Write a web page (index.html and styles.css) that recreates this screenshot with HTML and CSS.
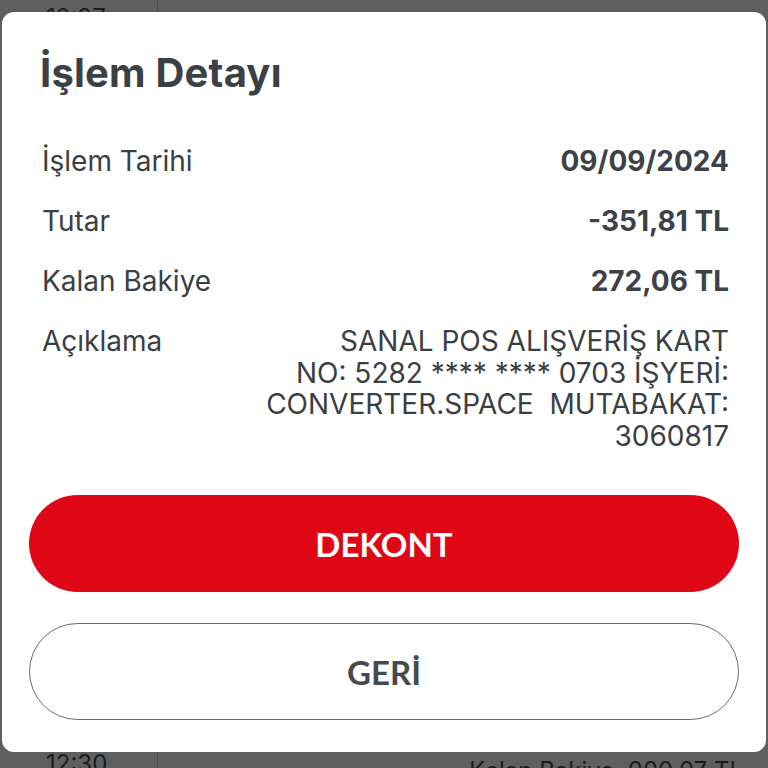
FILE: index.html
```html
<!DOCTYPE html>
<html lang="tr">
<head>
<meta charset="utf-8">
<title>İşlem Detayı</title>
<link rel="stylesheet" href="styles.css">
</head>
<body>
<div class="screen">
  <div class="list-strip list-strip--top">
    <div class="list-time list-time--top">12:37</div>
    <div class="list-body"></div>
  </div>

  <section class="modal">
    <h1 class="modal-title">İşlem Detayı</h1>
    <dl class="details">
      <div class="detail-row">
        <dt class="detail-label">İşlem Tarihi</dt>
        <dd class="detail-value">09/09/2024</dd>
      </div>
      <div class="detail-row">
        <dt class="detail-label">Tutar</dt>
        <dd class="detail-value">-351,81 TL</dd>
      </div>
      <div class="detail-row">
        <dt class="detail-label">Kalan Bakiye</dt>
        <dd class="detail-value">272,06 TL</dd>
      </div>
      <div class="detail-row">
        <dt class="detail-label">Açıklama</dt>
        <dd class="detail-value detail-value--desc">SANAL POS ALIŞVERİŞ KART<br>NO: 5282 **** **** 0703 İŞYERİ:<br>CONVERTER.SPACE&nbsp; MUTABAKAT:<br>3060817</dd>
      </div>
    </dl>
    <div class="actions">
      <button class="btn btn--primary">DEKONT</button>
      <button class="btn btn--outline">GERİ</button>
    </div>
  </section>

  <div class="list-strip list-strip--bottom">
    <div class="list-time list-time--bottom">12:30</div>
    <div class="list-body list-body--bottom">Kalan Bakiye&nbsp;&nbsp;000,07 TL</div>
  </div>
</div>
</body>
</html>
```

FILE: styles.css
```css
* { box-sizing: border-box; }

html, body {
  margin: 0;
  padding: 0;
}

body {
  background: #5f5f5f;
  font-family: Inter, Lato, "Liberation Sans", sans-serif;
  color: #3c4247;
}

.screen {
  width: 768px;
  height: 768px;
  display: flex;
  flex-direction: column;
  overflow: hidden;
}

.list-strip {
  display: flex;
  overflow: hidden;
  flex: none;
  color: #1c1c1c;
}

.list-strip--top {
  height: 12px;
}

.list-strip--bottom {
  height: 16px;
}

.list-time {
  width: 158px;
  flex: none;
  border-right: 1px solid #4f4f4f;
  display: flex;
  align-items: flex-start;
  padding-left: 46px;
  font-size: 24px;
  line-height: 1;
}

.list-time--top {
  padding-top: 6px;
}

.list-body {
  flex: 1;
}

.list-body--bottom {
  text-align: right;
  padding-right: 25px;
  padding-top: 7px;
  font-size: 24px;
  line-height: 1;
}

.modal {
  flex: none;
  height: 740px;
  margin: 0 2px;
  background: #ffffff;
  border-radius: 12px;
  padding: 38px 27px 32px;
  display: flex;
  flex-direction: column;
}

.modal-title {
  margin: 0;
  padding: 0 11px;
  font-size: 40px;
  line-height: 46px;
  font-weight: 700;
  color: #3b4045;
  letter-spacing: 0.2px;
}

.details {
  margin: 50px 0 0;
  padding: 0 10px 0 13px;
  display: flex;
  flex-direction: column;
  gap: 28.5px;
}

.detail-row {
  display: flex;
  justify-content: space-between;
  align-items: flex-start;
  font-size: 28px;
  line-height: 31.5px;
}

.detail-label {
  flex: none;
  color: #3a3f44;
}

.detail-value {
  margin: 0;
  font-weight: 700;
  text-align: right;
  color: #3c4247;
}

.detail-value--desc {
  font-weight: 400;
  color: #3a3f44;
}

.actions {
  margin-top: 43px;
  display: flex;
  flex-direction: column;
  gap: 31px;
}

.btn {
  height: 97px;
  width: 100%;
  border-radius: 49px;
  font-family: Lato, Inter, sans-serif;
  font-size: 33px;
  font-weight: 700;
  cursor: pointer;
}

.btn--primary {
  background: #df0715;
  border: none;
  color: #ffffff;
}

.btn--outline {
  background: #ffffff;
  border: 1.5px solid #6a6a6a;
  color: #454a4f;
}
```
